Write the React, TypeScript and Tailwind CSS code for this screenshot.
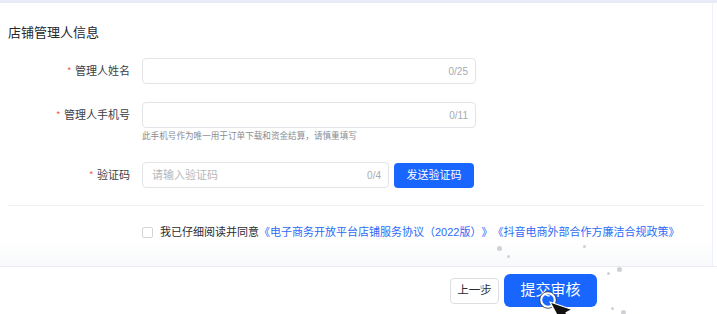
import React from 'react'

const FONT = { fontFamily: '"Liberation Sans", "Noto Sans CJK SC", sans-serif' }

type FieldProps = {
    label: string
    counter: string
    placeholder?: string
    width: string
    children?: React.ReactNode
}

function Field({ label, counter, placeholder, width, children }: FieldProps) {
    return (
        <div className="flex items-center">
            <div className="w-[130px] shrink-0 flex justify-end items-center text-[11px] text-[#3b3e45]">
                <span className="text-[#f5483b] text-[9px] mr-[4px]">*</span>
                {label}
            </div>
            <div className="ml-[12px] flex items-center gap-[5px]">
                <div className={`${width} h-[26px] border border-[#e2e4e9] rounded-[4px] flex items-center justify-between pl-[9px] pr-[7px]`}>
                    <span className="text-[11px] text-[#b4b7bd]">{placeholder}</span>
                    <span className="text-[10px] text-[#a8abb2]">{counter}</span>
                </div>
                {children}
            </div>
        </div>
    )
}

function Dot({ x, y, s = 4 }: { x: string; y: string; s?: number }) {
    return (
        <span
            className={`absolute rounded-full bg-[#cfd1d6] ${x} ${y}`}
            style={{ width: s, height: s }}
        />
    )
}

export default function App() {
    return (
        <div className="relative w-[717px] h-[314px] bg-white overflow-hidden flex flex-col [text-spacing-trim:space-all]" style={FONT}>
            <div className="h-[3px] bg-[#e7ebf8] shrink-0" />

            <div className="flex flex-1">
                <div className="w-[713px] border-r border-[#eef1f8] flex flex-col">
                    <h2 className="mt-[20px] ml-[8px] text-[13px] leading-[20px] text-[#25272c] font-normal">
                        店铺管理人信息
                    </h2>

                    <div className="mt-[15px]">
                        <Field label="管理人姓名" counter="0/25" width="w-[334px]" />
                    </div>

                    <div className="mt-[18px]">
                        <Field label="管理人手机号" counter="0/11" width="w-[334px]" />
                        <p className="ml-[142px] mt-[1px] text-[8.6px] leading-[14px] text-[#8a8d93]">
                            此手机号作为唯一用于订单下载和资金结算，请慎重填写
                        </p>
                    </div>

                    <div className="mt-[19px]">
                        <Field label="验证码" counter="0/4" placeholder="请输入验证码" width="w-[247px]">
                            <button className="w-[80px] h-[25px] rounded-[4px] bg-[#1966ff] text-white text-[11px]">
                                发送验证码
                            </button>
                        </Field>
                    </div>

                    <div className="mt-[17px] mx-[8px] h-px bg-[#f0f1f3]" />

                    <div className="mt-[19px] ml-[142px] flex items-center">
                        <span className="w-[11px] h-[11px] border border-[#d3d5da] rounded-[2px] shrink-0" />
                        <span className="ml-[7px] text-[11px] leading-[14px] text-[#2a2c31] whitespace-nowrap">
                            我已仔细阅读并同意
                            <span className="text-[#2d6af6]">《电子商务开放平台店铺服务协议（2022版）》《抖音电商外部合作方廉洁合规政策》</span>
                        </span>
                    </div>

                    <div className="flex-1 bg-gradient-to-b from-white to-[#f8f9fb]" />
                </div>
            </div>

            <div className="h-[48px] shrink-0 border-t border-[#ebecf0] bg-white flex items-center pl-[450px] gap-[5px]">
                <button className="w-[49px] h-[26px] border border-[#dcdee2] rounded-[4px] bg-white text-[11.5px] text-[#2a2c31]">
                    上一步
                </button>
                <button className="w-[93px] h-[33px] rounded-[6px] bg-[#1966ff] text-white text-[15px]">
                    提交审核
                </button>
            </div>

            {/* click particles */}
            <Dot x="left-[497px]" y="top-[246px]" s={5} />
            <Dot x="left-[507px]" y="top-[255px]" s={3} />
            <Dot x="left-[583px]" y="top-[245px]" s={3} />
            <Dot x="left-[548px]" y="top-[224px]" s={3} />
            <Dot x="left-[617px]" y="top-[267px]" s={5} />
            <Dot x="left-[607px]" y="top-[272px]" s={3} />
            <Dot x="left-[480px]" y="top-[285px]" s={4} />
            <Dot x="left-[611px]" y="top-[307px]" s={3} />
            <Dot x="left-[621px]" y="top-[310px]" s={5} />

            {/* cursor with click ring */}
            <svg className="absolute left-[538px] top-[290px]" width="40" height="30" viewBox="0 0 40 30">
                <circle cx="10" cy="10" r="7" fill="none" stroke="#ffffff" strokeWidth="2.5" />
                <circle cx="10" cy="10" r="8.3" fill="none" stroke="#2b2d33" strokeWidth="0.8" />
                <path d="M12 12 L12 36 L17 31 L21 40 L25 38 L21 29 L28 29 Z" fill="#111" stroke="#fff" strokeWidth="1.3" strokeLinejoin="round" transform="rotate(-28 12 12)" />
            </svg>
        </div>
    )
}
